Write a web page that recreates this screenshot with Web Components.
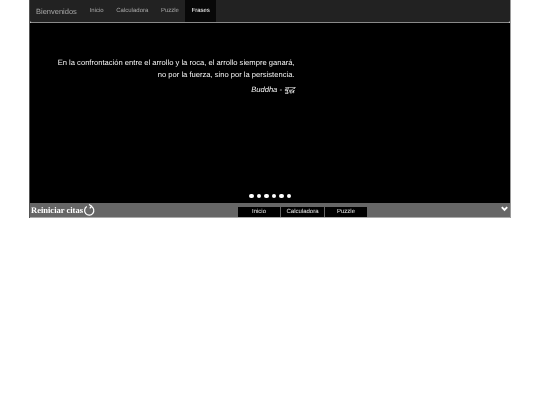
<!DOCTYPE html>
<html lang="es">
<head>
<meta charset="utf-8">
<title>Frases</title>
<style>
  html, body { margin: 0; background: #fff; }
  body { font-family: "Liberation Sans", Arial, sans-serif; text-rendering: geometricPrecision; }
</style>
</head>
<body>
<site-page>
  <site-nav>
    <nav-link>Inicio</nav-link>
    <nav-link>Calculadora</nav-link>
    <nav-link>Puzzle</nav-link>
    <nav-link active>Frases</nav-link>
  </site-nav>
  <quote-stage author="Buddha - बुद्ध">
    En la confrontación entre el arrollo y la roca, el arrollo siempre ganará,<br>
    no por la fuerza, sino por la persistencia.
  </quote-stage>
  <site-footer>
    <foot-button>Inicio</foot-button>
    <foot-button wide>Calculadora</foot-button>
    <foot-button>Puzzle</foot-button>
  </site-footer>
</site-page>

<script>
class SitePage extends HTMLElement {
  constructor() {
    super();
    this.attachShadow({ mode: 'open' });
    this.shadowRoot.innerHTML = `
      <style>
        :host {
          display: block;
          width: 480px;
          margin-left: 29px;
          border-right: 1px solid #9a9a9a;
          border-left: 1px solid #555;
          filter: blur(0.25px);
        }
      </style>
      <slot></slot>
    `;
  }
}

class SiteNav extends HTMLElement {
  constructor() {
    super();
    this.attachShadow({ mode: 'open' });
    this.shadowRoot.innerHTML = `
      <style>
        :host {
          display: flex;
          height: 22px;
          background: #222;
          border-bottom: 1px solid #8a8a8a;
          border-radius: 0 0 2px 2px;
          padding-left: 6px;
        }
        .brand {
          color: #a8a8a8;
          font-size: 7.5px;
          line-height: 23px;
          margin-right: 6.5px;
        }
      </style>
      <span class="brand">Bienvenidos</span>
      <slot></slot>
    `;
  }
}

class NavLink extends HTMLElement {
  constructor() {
    super();
    this.attachShadow({ mode: 'open' });
    this.shadowRoot.innerHTML = `
      <style>
        :host {
          display: block;
          padding: 1px 6.3px 0;
          font-size: 6px;
          line-height: 21px;
          height: 21px;
          color: #a8a8a8;
        }
        :host([active]) {
          background: #080808;
          color: #fff;
        }
      </style>
      <slot></slot>
    `;
  }
}

class QuoteStage extends HTMLElement {
  constructor() {
    super();
    this.attachShadow({ mode: 'open' });
    this.shadowRoot.innerHTML = `
      <style>
        :host {
          display: flex;
          flex-direction: column;
          height: 180px;
          background: #000;
          color: #f6f6f6;
          box-sizing: border-box;
          padding: 34px 0 5px 0;
        }
        .quote {
          width: 264.5px;
          text-align: right;
          font-size: 7.6px;
          line-height: 12px;
        }
        .author {
          width: 264.5px;
          margin-top: 3px;
          text-align: right;
          font-size: 7.6px;
          line-height: 12px;
          font-style: italic;
        }
        .dots {
          display: flex;
          justify-content: center;
          gap: 3px;
          margin-top: auto;
        }
        .dots i {
          width: 4.5px;
          height: 4.5px;
          border-radius: 50%;
          background: #fff;
        }
      </style>
      <div class="quote"><slot></slot></div>
      <div class="author"></div>
      <div class="dots"><i></i><i></i><i></i><i></i><i></i><i></i></div>
    `;
    this.shadowRoot.querySelector('.author').textContent = this.getAttribute('author');
  }
}

class SiteFooter extends HTMLElement {
  constructor() {
    super();
    this.attachShadow({ mode: 'open' });
    this.shadowRoot.innerHTML = `
      <style>
        :host {
          display: grid;
          grid-template-columns: 208px auto 1fr;
          align-items: center;
          height: 15px;
          background: #666;
          border-bottom: 1px solid #aaa;
          box-sizing: border-box;
        }
        .restart {
          display: flex;
          align-items: center;
          padding-left: 1px;
          color: #fff;
          font: bold 8.5px "Liberation Serif", "Times New Roman", serif;
        }
        .links { display: flex; gap: 1px; padding-top: 3px; }
        .more { justify-self: end; padding: 0 2px 2px 0; }
        svg { display: block; }
      </style>
      <div class="restart">
        <span>Reiniciar citas</span>
        <svg width="12" height="12" viewBox="0 0 12 12" fill="none" stroke="#fff" stroke-width="1.2">
          <path d="M3.8 2.6 A4.6 4.6 0 1 0 8.2 2.4"/>
          <path d="M6 0.6 L8.6 2.2 L6.8 4.4"/>
        </svg>
      </div>
      <div class="links"><slot></slot></div>
      <div class="more">
        <svg width="7" height="6" viewBox="0 0 7 6" fill="none" stroke="#fff" stroke-width="1.9">
          <path d="M0.8 1.2 L3.5 4 L6.2 1.2"/>
        </svg>
      </div>
    `;
  }
}

class FootButton extends HTMLElement {
  constructor() {
    super();
    this.attachShadow({ mode: 'open' });
    this.shadowRoot.innerHTML = `
      <style>
        :host {
          display: block;
          width: 42px;
          height: 10px;
          background: #000;
          color: #eee;
          font-size: 6px;
          line-height: 10px;
          text-align: center;
        }
        :host([wide]) { width: 43px; }
      </style>
      <slot></slot>
    `;
  }
}

customElements.define('site-page', SitePage);
customElements.define('site-nav', SiteNav);
customElements.define('nav-link', NavLink);
customElements.define('quote-stage', QuoteStage);
customElements.define('site-footer', SiteFooter);
customElements.define('foot-button', FootButton);
</script>
</body>
</html>
